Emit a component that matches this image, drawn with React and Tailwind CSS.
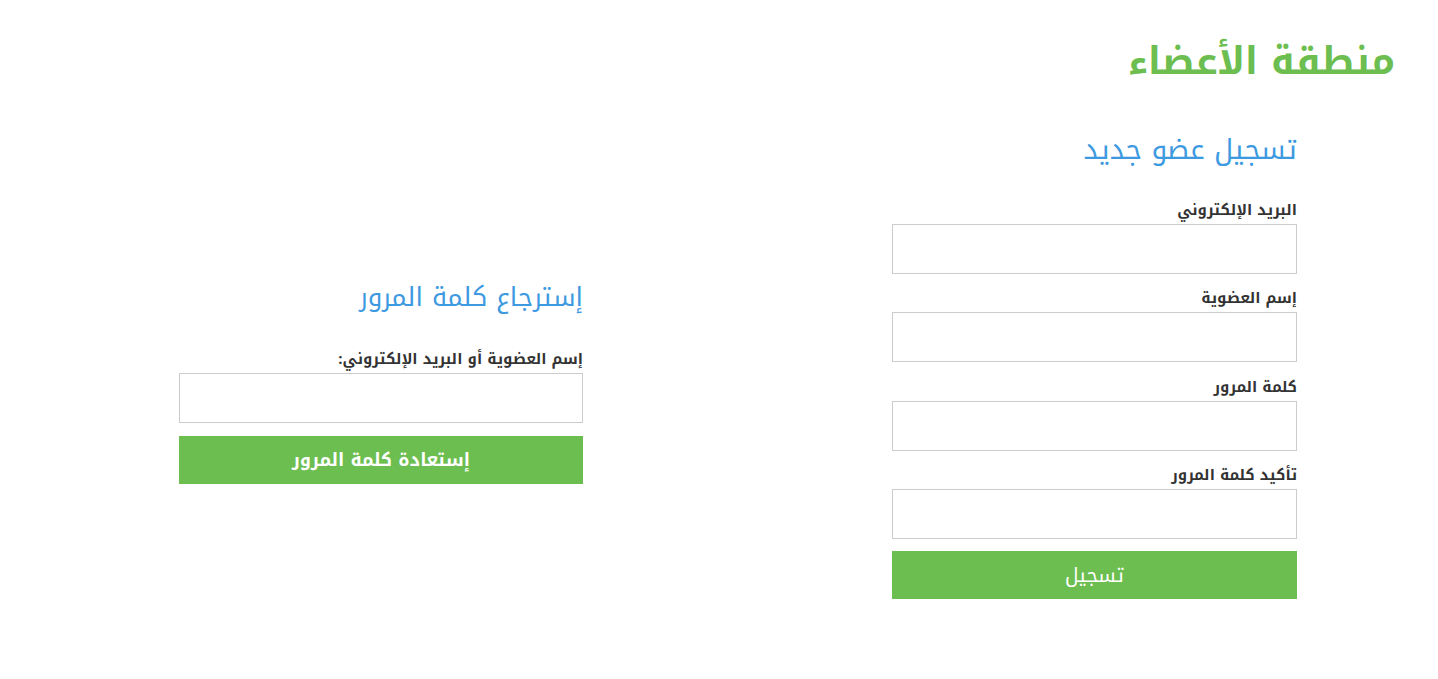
const font = { fontFamily: '"Noto Kufi Arabic", "Noto Sans Arabic", "DejaVu Sans", sans-serif' };

function Field({ label, type = 'text', gap = 'mb-[14px]' }) {
  return (
    <div className={gap}>
      <label className="block h-5 mb-1 text-[15px] leading-5 font-bold text-[#333]">{label}</label>
      <input type={type} className="block w-full h-[50px] border border-[#cccccc] bg-white outline-none px-3" />
    </div>
  );
}

export default function App() {
  return (
    <div dir="rtl" className="min-h-screen bg-white" style={font}>
      {/* Page title */}
      <div className="pr-[43px] pt-[36px]">
        <h1 className="text-[38px] leading-[50px] font-bold text-[#6cbe50]">منطقة الأعضاء</h1>
      </div>

      <div className="flex pr-[141px] gap-[309px] mt-[46px]">
        {/* Register */}
        <div className="w-[405px]">
          <h2 className="text-[28px] leading-9 text-[#3d9ae0] mb-[32px]">تسجيل عضو جديد</h2>
          <Field label="البريد الإلكتروني" />
          <Field label="إسم العضوية" gap="mb-[15px]" />
          <Field label="كلمة المرور" type="password" />
          <Field label="تأكيد كلمة المرور" type="password" gap="mb-[12px]" />
          <button className="w-full h-[48px] bg-[#6cbe50] text-white text-[20px]">تسجيل</button>
        </div>

        {/* Recover password */}
        <div className="w-[404px] mt-[150px]">
          <h2 className="text-[26px] leading-8 text-[#3d9ae0] mb-[35px]">إسترجاع كلمة المرور</h2>
          <Field label="إسم العضوية أو البريد الإلكتروني:" gap="mb-[13px]" />
          <button className="w-full h-[48px] bg-[#6cbe50] text-white text-[18px] font-bold">إستعادة كلمة المرور</button>
        </div>
      </div>
    </div>
  );
}
